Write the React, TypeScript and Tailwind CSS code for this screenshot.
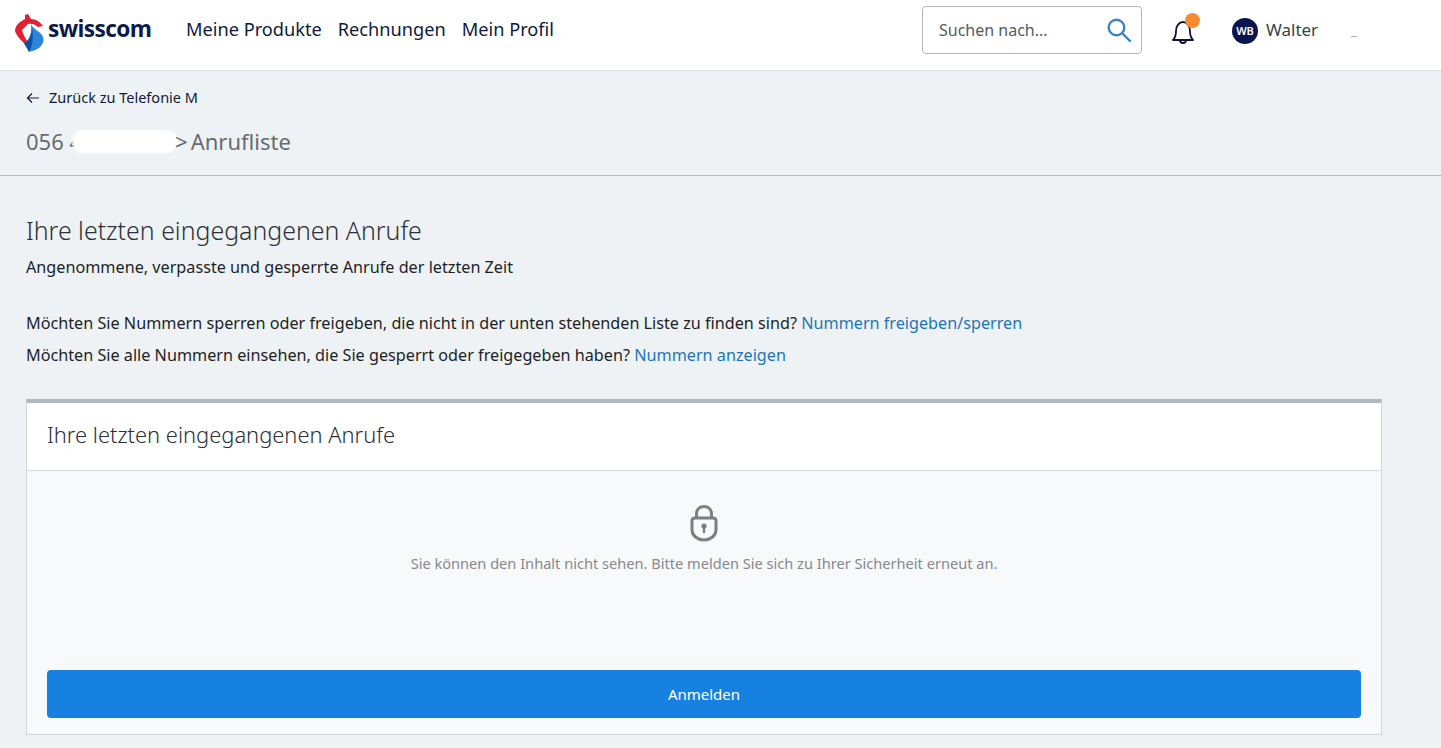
export default function App() {
  return (
    <div className="min-h-[748px] bg-[#eef2f5] font-['Noto_Sans',sans-serif] text-[#1f2430] overflow-hidden">
      <header className="h-[71px] bg-white border-b border-[#dde1e8] flex items-center pl-[14px] pb-[8px]">
        <div className="flex items-center w-[172px]">
          <svg width="32" height="40" viewBox="0 0 32 40" className="shrink-0 mt-[3px]">
            <path d="M14 1 L17 6 C22 6 26 9 29 13 L24 14 C21 11 17 10 14 11 L8 17 C9 22 12 26 15 31 L12 32 C9 29 3 24 1 18 C1 13 5 9 11 6 L11 2 Z" fill="#e2202f" />
            <path d="M17 11 C19 16 25 18 28 22 C31 26 29 32 25 35 C22 37 18 38 15 39 C14 36 12 34 10 30 C15 28 18 20 17 11 Z" fill="#2a86dc" />
            <path d="M18 15 C18 22 15 28 10 30 C12 34 14 36 15 39 C18 34 20 24 18 15 Z" fill="#114fa6" />
          </svg>
          <span className="ml-[2px] -mt-[3px] text-[22.7px] font-bold text-[#0c1a4b] font-['Open_Sans',sans-serif] tracking-[-0.6px] leading-none">swisscom</span>
        </div>
        <nav className="flex items-center gap-4 text-[18.2px] text-[#0f1b3d] -mt-[2px]">
          <span>Meine Produkte</span>
          <span>Rechnungen</span>
          <span>Mein Profil</span>
        </nav>
        <div className="ml-auto flex items-center">
          <div className="w-[220px] h-[48px] border border-[#b2b6bb] rounded-[4px] -mt-[3px] flex items-center justify-between pl-4 pr-[9px] text-[#555a60] text-[16px]">
            <span>Suchen nach...</span>
            <svg width="26" height="26" viewBox="0 0 26 26" fill="none" stroke="#3b82c4" strokeWidth="2.4" strokeLinecap="round">
              <circle cx="10.5" cy="10.5" r="7.8" />
              <path d="M16.5 16.5 L24 24" />
            </svg>
          </div>
          <div className="relative ml-[29px] w-[26px] h-[30px] -mt-[1px]">
            <svg width="24" height="26" viewBox="0 0 24 26" fill="none" stroke="#0c1433" strokeWidth="1.8" strokeLinejoin="round" className="absolute left-0 top-[3px]">
              <path d="M2 21 C4 19 5 16 5 12 C5 7 8 3 12 3 C16 3 19 7 19 12 C19 16 20 19 22 21 Z" />
              <path d="M9 21 C9 25 15 25 15 21" />
            </svg>
            <span className="absolute left-[14px] -top-[3px] w-[15px] h-[15px] rounded-full bg-[#f98a2d]" />
          </div>
          <div className="ml-[35px] w-[26px] h-[26px] rounded-full bg-[#0a1550] text-white text-[11px] font-semibold flex items-center justify-center">WB</div>
          <span className="relative ml-[8px] w-[175px] text-[17px] leading-[24px] -mt-[2px] text-[#3a3f47]">
            Walter
            <span className="absolute left-[85px] top-[18px] w-[6px] h-px bg-[#a9acb0]" />
          </span>
        </div>
      </header>

      <section className="h-[105px] border-b border-[#b7bbc0] pl-[26px] pt-[16px]">
        <div className="flex items-center text-[14.5px] text-[#0f1b3d] h-[22px]">
          <svg width="14" height="12" viewBox="0 0 14 12" fill="none" stroke="#0f1b3d" strokeWidth="1.2" className="mr-[9px]">
            <path d="M13 6 H1.5 M6 1.5 L1.5 6 L6 10.5" />
          </svg>
          Zurück zu Telefonie M
        </div>
        <div className="mt-[17px] flex items-center text-[22px] text-[#666b72] leading-[30px]">
          <span>056 4</span>
          <span className="w-[106px] h-[23px] -ml-[10px] -mr-[3px] rounded-full bg-white blur-[1px]" />
          <span className="relative">&gt;</span>
          <span className="ml-[3px]">Anrufliste</span>
        </div>
      </section>

      <main className="pl-[26px] pr-[59px]">
        <h1 className="mt-[36px] text-[24.9px] leading-[36px] font-light text-[#2c3038]">Ihre letzten eingegangenen Anrufe</h1>
        <p className="mt-[7px] text-[16.2px] leading-[24px] text-[#1c1f26]">Angenommene, verpasste und gesperrte Anrufe der letzten Zeit</p>
        <p className="mt-[28px] text-[16.2px] leading-[32px] text-[#1c1f26]">
          Möchten Sie Nummern sperren oder freigeben, die nicht in der unten stehenden Liste zu finden sind? <span className="text-[#1c75bc]">Nummern freigeben/sperren</span>
        </p>
        <p className="text-[16.2px] leading-[32px] text-[#1c1f26]">
          Möchten Sie alle Nummern einsehen, die Sie gesperrt oder freigegeben haben? <span className="text-[#1c75bc]">Nummern anzeigen</span>
        </p>

        <div className="mt-[28px] h-[336px] border border-[#d3d6d9] border-t-[4px] border-t-[#b2b8bd] bg-[#f8f9fb] flex flex-col">
          <div className="h-[68px] shrink-0 bg-white border-b border-[#d7dadd] pl-5 pb-[2px] flex items-center text-[21.9px] font-light text-[#2c3038]">
            Ihre letzten eingegangenen Anrufe
          </div>
          <div className="flex flex-col items-center pt-[33px]">
            <svg width="30" height="38" viewBox="0 0 30 38" fill="none" stroke="#7c7f82" strokeWidth="3">
              <path d="M7.5 15 V10 C7.5 0 22.5 0 22.5 10 V15" />
              <path d="M3 17 C3 15 4 14 6 14 H24 C26 14 27 15 27 17 V26 C27 32 21 36 15 36 C9 36 3 32 3 26 Z" />
              <circle cx="15" cy="22" r="2.6" fill="#7c7f82" stroke="none" />
              <path d="M15 23 V29" strokeWidth="2.4" />
            </svg>
            <p className="mt-[11px] text-[14.6px] leading-[20px] text-[#85898e]">Sie können den Inhalt nicht sehen. Bitte melden Sie sich zu Ihrer Sicherheit erneut an.</p>
          </div>
          <div className="mt-auto mx-5 mb-4 h-[48px] rounded-[4px] bg-[#1781e2] text-white text-[15px] flex items-center justify-center">
            Anmelden
          </div>
        </div>
      </main>
    </div>
  );
}
